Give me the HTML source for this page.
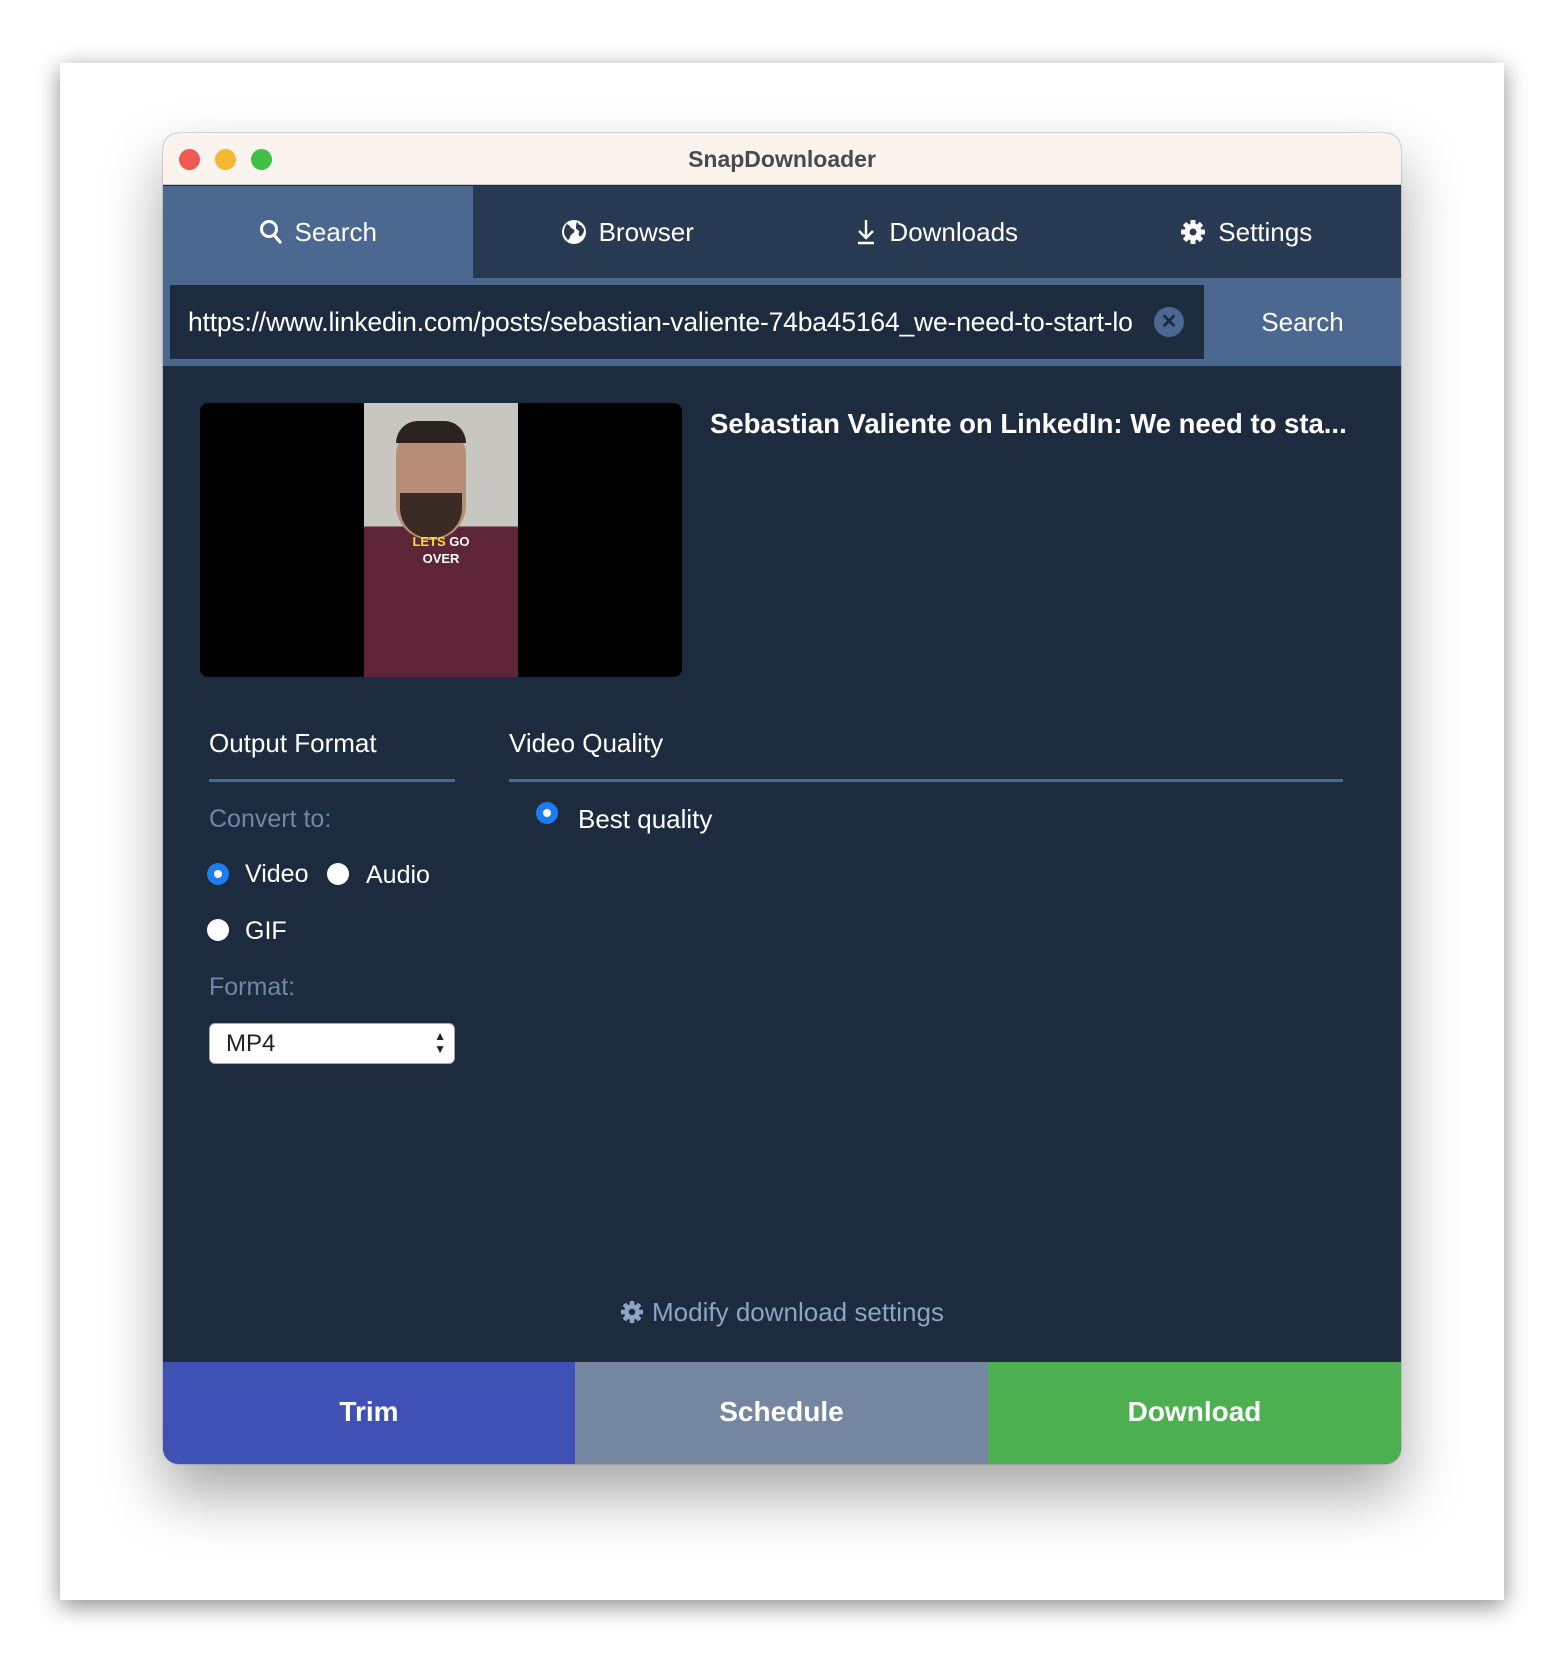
<!DOCTYPE html>
<html><head><meta charset="utf-8"><style>
*{margin:0;padding:0;box-sizing:border-box}
body{width:1564px;height:1664px;background:#fff;position:relative;overflow:hidden;font-family:"Liberation Sans",sans-serif}
.card{position:absolute;left:60px;top:63px;width:1444px;height:1537px;background:#fff;box-shadow:0 6px 22px rgba(0,0,0,.45)}
.win{position:absolute;left:163px;top:133px;width:1238px;height:1331px;border-radius:16px;overflow:hidden;background:#1d2b3f;box-shadow:0 30px 60px rgba(0,0,0,.35),0 0 0 1px rgba(0,0,0,.12)}
.title{position:absolute;left:0;top:0;width:100%;height:52px;background:#faf3ee;text-align:center;line-height:52px;font-weight:bold;font-size:23px;color:#4a4a4a;border-bottom:1px solid #ccc}
.dot{position:absolute;top:16px;width:21px;height:21px;border-radius:50%}
.tabs{position:absolute;top:53px;left:0;width:100%;height:92px;background:#283a52}
.tab{position:absolute;top:0;height:92px;width:309.5px;display:flex;align-items:center;justify-content:center;color:#fff;font-size:26px;gap:12px}
.band{position:absolute;top:145px;left:0;width:100%;height:88px;background:#4a6890}
.inp{position:absolute;left:7px;top:7px;width:1034px;height:74px;background:#1d2b3f;color:#fff;font-size:26.5px;line-height:74px;padding-left:18px;white-space:nowrap;overflow:hidden;letter-spacing:-.2px}
.x{position:absolute;left:991px;top:29px;width:30px;height:30px;border-radius:50%;background:#4a6890;color:#1d2b3f;text-align:center;line-height:30px;font-size:20px;font-weight:bold}
.sbtn{position:absolute;left:1041px;top:0;width:197px;height:88px;color:#fff;font-size:26px;text-align:center;line-height:88px}
.abs{position:absolute;color:#fff}
.radio{position:absolute;width:22px;height:22px;border-radius:50%;background:#fff}
.radio.on{background:#1e7cf2}
.radio.on::after{content:"";position:absolute;left:7px;top:7px;width:8px;height:8px;border-radius:50%;background:#fff}
.btn{position:absolute;top:1229px;height:102px;color:#fff;font-weight:bold;font-size:28px;text-align:center;line-height:100px}
</style></head><body>
<div class="card"></div>
<div class="win">
 <div class="title">SnapDownloader
  <div class="dot" style="left:16px;background:#ee5a52"></div>
  <div class="dot" style="left:52px;background:#f5b831"></div>
  <div class="dot" style="left:88px;background:#3ec144"></div>
 </div>
 <div class="tabs">
  <div class="tab" style="left:0;background:#4a6890"><svg width="24" height="26" viewBox="0 0 24 26"><circle cx="10" cy="10" r="7.5" fill="none" stroke="#fff" stroke-width="3"/><path d="M15 16l6 7" stroke="#fff" stroke-width="3.2" stroke-linecap="round"/></svg>Search</div>
  <div class="tab" style="left:309.5px"><svg width="26" height="26" viewBox="0 0 26 26"><circle cx="13" cy="13" r="12" fill="#fff"/><path d="M6 5c3 1 3 4 6 5s1 4-1 5-2 5-4 6c-2-2-4-5-4-8 0-3 1-6 3-8zM16 3c2 1 1 3 3 3s2 3 4 4c0 3-1 5-3 7-2 1-3-2-2-4s-3-2-3-4 0-3 1-6z" fill="#283a52"/></svg>Browser</div>
  <div class="tab" style="left:619px"><svg width="22" height="28" viewBox="0 0 22 28"><path d="M11 2v18M4 13l7 7 7-7" fill="none" stroke="#fff" stroke-width="2.4"/><path d="M3 25h16" stroke="#fff" stroke-width="2.4"/></svg>Downloads</div>
  <div class="tab" style="left:928.5px"><svg width="26" height="26" viewBox="0 0 26 26"><g fill="#fff"><circle cx="13" cy="13" r="8.5"/><rect x="10.5" y="1" width="5" height="24" rx="1"/><rect x="10.5" y="1" width="5" height="24" rx="1" transform="rotate(45 13 13)"/><rect x="10.5" y="1" width="5" height="24" rx="1" transform="rotate(90 13 13)"/><rect x="10.5" y="1" width="5" height="24" rx="1" transform="rotate(135 13 13)"/></g><circle cx="13" cy="13" r="3.5" fill="#283a52"/></svg>Settings</div>
 </div>
 <div class="band">
  <div class="inp">https://www.linkedin.com/posts/sebastian-valiente-74ba45164_we-need-to-start-lo</div>
  <div class="x">✕</div>
  <div class="sbtn">Search</div>
 </div>
 <div style="position:absolute;left:37px;top:270px;width:482px;height:274px;background:#000;border-radius:8px;overflow:hidden">
  <div style="position:absolute;left:164px;top:0;width:154px;height:274px;background:linear-gradient(#c8c6c0 0,#c8c6c0 45%,#5e2438 45%,#5e2438 100%)"></div>
  <div style="position:absolute;left:196px;top:22px;width:70px;height:115px;border-radius:35px 35px 40px 40px;background:#b88d78"></div>
  <div style="position:absolute;left:196px;top:18px;width:70px;height:22px;border-radius:30px 30px 0 0;background:#2b2320"></div>
  <div style="position:absolute;left:200px;top:90px;width:62px;height:45px;border-radius:0 0 30px 30px;background:#3a2a24"></div>
  <div style="position:absolute;left:164px;top:130px;width:154px;text-align:center;color:#fff;font-weight:bold;font-size:13px;line-height:17px"><span style="color:#f0e130">LETS</span> GO<br>OVER</div>
 </div>
 <div class="abs" style="left:547px;top:275px;font-size:27.5px;font-weight:bold;white-space:nowrap">Sebastian Valiente on LinkedIn: We need to sta...</div>
 <div class="abs" style="left:46px;top:595px;font-size:26px">Output Format</div>
 <div style="position:absolute;left:46px;top:646px;width:246px;height:3px;background:#4a6890"></div>
 <div class="abs" style="left:346px;top:595px;font-size:26px">Video Quality</div>
 <div style="position:absolute;left:346px;top:646px;width:834px;height:3px;background:#4a6890"></div>
 <div class="abs" style="left:46px;top:672px;font-size:25px;color:#6f88a8">Convert to:</div>
 <div class="radio on" style="left:373px;top:669px"></div>
 <div class="abs" style="left:415px;top:671px;font-size:26px">Best quality</div>
 <div class="radio on" style="left:44px;top:730px"></div>
 <div class="abs" style="left:82px;top:727px;font-size:25px">Video</div>
 <div class="radio" style="left:164px;top:730px"></div>
 <div class="abs" style="left:203px;top:728px;font-size:25px">Audio</div>
 <div class="radio" style="left:44px;top:786px"></div>
 <div class="abs" style="left:82px;top:784px;font-size:25px">GIF</div>
 <div class="abs" style="left:46px;top:840px;font-size:25px;color:#6f88a8">Format:</div>
 <div style="position:absolute;left:46px;top:890px;width:246px;height:41px;background:#fff;border-radius:6px;border:1px solid #aaa;font-size:24px;line-height:39px;padding-left:16px;color:#222">MP4<span style="position:absolute;right:8px;top:0;font-size:12px;line-height:13px;padding-top:6px">▲<br>▼</span></div>
 <div class="abs" style="left:0;width:100%;top:1164px;text-align:center;font-size:26px;color:#8ea4c2"><svg width="24" height="24" viewBox="0 0 26 26" style="vertical-align:-3px;margin-right:8px"><g fill="#8ea4c2"><circle cx="13" cy="13" r="8.5"/><rect x="10.5" y="1" width="5" height="24" rx="1"/><rect x="10.5" y="1" width="5" height="24" rx="1" transform="rotate(45 13 13)"/><rect x="10.5" y="1" width="5" height="24" rx="1" transform="rotate(90 13 13)"/><rect x="10.5" y="1" width="5" height="24" rx="1" transform="rotate(135 13 13)"/></g><circle cx="13" cy="13" r="3.5" fill="#1d2b3f"/></svg>Modify download settings</div>
 <div class="btn" style="left:0;width:412px;background:#4051b5">Trim</div>
 <div class="btn" style="left:412px;width:413px;background:#7587a0">Schedule</div>
 <div class="btn" style="left:825px;width:413px;background:#4caf50">Download</div>
</div>
</body></html>
